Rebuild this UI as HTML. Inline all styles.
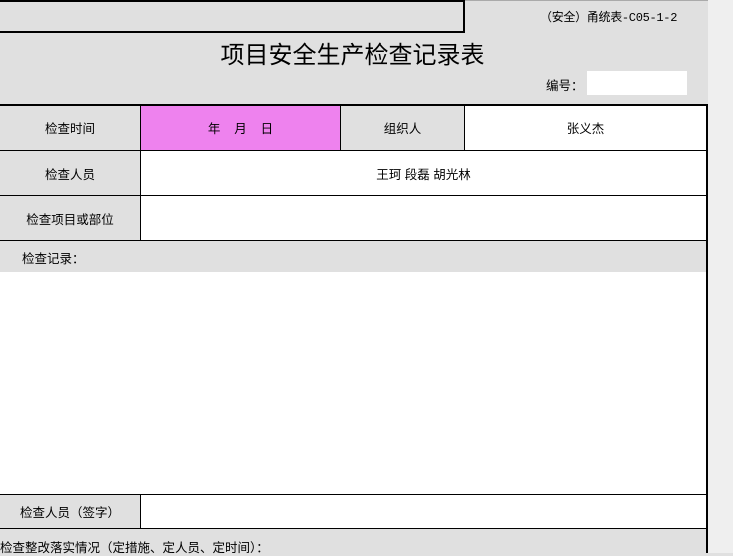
<!DOCTYPE html><html><head><meta charset="utf-8"><style>
body{margin:0;width:733px;height:553px;background:#e0e0e0;position:relative;overflow:hidden;font-family:"Liberation Sans","Noto Sans CJK SC",sans-serif;color:#000}
div{position:absolute;box-sizing:border-box}
.t{font-size:12.5px;display:flex;align-items:center;justify-content:center}
.b{background:#000}
</style></head><body>
<div style="left:708px;top:0;width:25px;height:553px;background:#efefef"></div>
<div class="b" style="left:0;top:0;width:465px;height:2px"></div>
<div class="b" style="left:0;top:31px;width:465px;height:2px"></div>
<div class="b" style="left:463px;top:0;width:2px;height:33px"></div>
<div style="left:465px;top:0;width:243px;height:1px;background:#aaa"></div>
<div style="left:540px;top:8px;font-size:12px;font-family:'Liberation Mono','Noto Sans CJK SC',monospace;letter-spacing:-0.3px">（安全）甬统表-C05-1-2</div>
<div style="left:0;top:35px;width:705px;text-align:center;font-size:24px">项目安全生产检查记录表</div>
<div style="left:546px;top:75px;font-size:12.5px">编号：</div>
<div style="left:587px;top:71px;width:100px;height:24px;background:#fff"></div>
<div style="left:141px;top:106px;width:199px;height:44px;background:#ee82ee"></div>
<div style="left:465px;top:106px;width:242px;height:44px;background:#fff"></div>
<div style="left:141px;top:151px;width:566px;height:89px;background:#fff"></div>
<div style="left:0;top:272px;width:707px;height:222px;background:#fff"></div>
<div style="left:141px;top:495px;width:566px;height:33px;background:#fff"></div>
<div class="b" style="left:0;top:104px;width:708px;height:2px"></div>
<div class="b" style="left:706px;top:104px;width:2px;height:449px"></div>
<div class="b" style="left:0;top:150px;width:707px;height:1px"></div>
<div class="b" style="left:0;top:195px;width:707px;height:1px"></div>
<div class="b" style="left:0;top:240px;width:707px;height:1px"></div>
<div class="b" style="left:0;top:494px;width:707px;height:1px"></div>
<div class="b" style="left:0;top:528px;width:707px;height:1px"></div>
<div class="b" style="left:140px;top:105px;width:1px;height:135px"></div>
<div class="b" style="left:340px;top:105px;width:1px;height:45px"></div>
<div class="b" style="left:464px;top:105px;width:1px;height:45px"></div>
<div class="b" style="left:140px;top:494px;width:1px;height:34px"></div>
<div class="t" style="left:0;top:105px;width:140px;height:45px">检查时间</div>
<div class="t" style="left:141px;top:105px;width:199px;height:45px;white-space:pre">年    月    日</div>
<div class="t" style="left:341px;top:105px;width:123px;height:45px">组织人</div>
<div class="t" style="left:465px;top:105px;width:241px;height:45px">张义杰</div>
<div class="t" style="left:0;top:151px;width:140px;height:44px">检查人员</div>
<div class="t" style="left:141px;top:151px;width:565px;height:44px;white-space:pre">王珂 段磊 胡光林</div>
<div class="t" style="left:0;top:196px;width:140px;height:44px">检查项目或部位</div>
<div style="left:22px;top:248px;font-size:12.5px">检查记录：</div>
<div class="t" style="left:0;top:495px;width:140px;height:33px">检查人员（签字）</div>
<div style="left:0;top:537px;font-size:12.5px">检查整改落实情况（定措施、定人员、定时间）：</div>
</body></html>
